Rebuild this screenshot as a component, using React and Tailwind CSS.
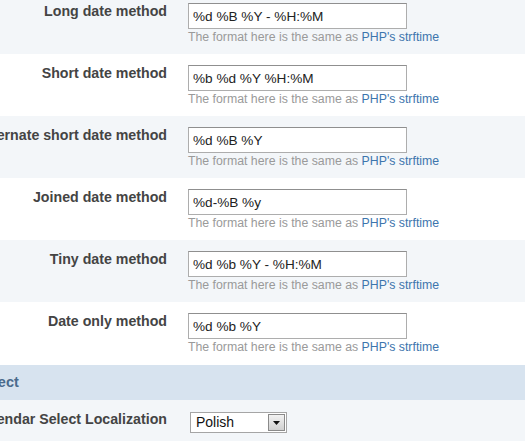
import React from "react";

const rows = [
  { label: "Long date method", value: "%d %B %Y - %H:%M" },
  { label: "Short date method", value: "%b %d %Y %H:%M" },
  { label: "Alternate short date method", value: "%d %B %Y" },
  { label: "Joined date method", value: "%d-%B %y" },
  { label: "Tiny date method", value: "%d %b %Y - %H:%M" },
  { label: "Date only method", value: "%d %b %Y" },
];

const Hint = () => (
  <p className="h-[16px] text-[12.3px] leading-[16px] text-[#9a9a9a] whitespace-nowrap">
    The format here is the same as <a href="#" className="text-[#3d75ad]">PHP's strftime</a>
  </p>
);

const Row = ({ label, value, odd }) => (
  <div className={`flex h-[62px] pt-[11px] ${odd ? "bg-[#f3f6f9]" : "bg-white"}`}>
    {/* Label column, right aligned */}
    <div className="w-[267px] shrink-0 flex justify-end">
      <span className="whitespace-nowrap text-[14.2px] leading-[17px] font-bold text-[#444]">{label}</span>
    </div>
    <div className="ml-[21px]">
      <input
        type="text"
        defaultValue={value}
        className="block w-[219px] h-[26px] border border-[#adadad] border-t-[#8f8f8f] bg-white px-[4px] text-[13.6px] text-[#222] outline-none"
      />
      <Hint />
    </div>
  </div>
);

export default function App() {
  return (
    <div className="w-[525px] h-[441px] overflow-hidden bg-white font-['Liberation_Sans',Arial,sans-serif]">
      <div className="-mt-[8px] -ml-[100px] w-[625px]">
        {rows.map((r, i) => (
          <Row key={r.label} label={r.label} value={r.value} odd={i % 2 === 0} />
        ))}

        {/* Section header */}
        <div className="h-[35px] mt-[1px] bg-[#d7e3ef] pl-[10px] flex items-center">
          <span className="whitespace-nowrap text-[14.5px] font-bold text-[#4a6b8c]">Calendar Select</span>
        </div>

        {/* Localization row */}
        <div className="flex h-[62px] pt-[11px] bg-[#f3f6f9]">
          <div className="w-[267px] shrink-0 flex justify-end">
            <span className="whitespace-nowrap text-[14.2px] leading-[17px] font-bold text-[#444]">Calendar Select Localization</span>
          </div>
          <div className="ml-[23px] pt-[1px]">
            <div className="flex items-center w-[97px] h-[21px] border border-[#a5a5a5] bg-white">
              <span className="flex-1 pl-[5px] text-[14px] text-[#111]">Polish</span>
              <span className="mr-[1px] flex items-center justify-center w-[17px] h-[17px] border border-[#8a8a8a] bg-gradient-to-b from-[#f2f2f2] to-[#d0d0d0]">
                <svg width="7" height="4" viewBox="0 0 7 4">
                  <path d="M0 0h7L3.5 4z" fill="#111" />
                </svg>
              </span>
            </div>
            <p className="mt-[5px] text-[12.3px] leading-[16px] text-[#9a9a9a] whitespace-nowrap">
              Language used to display the calendar select popup on this board
            </p>
          </div>
        </div>
      </div>
    </div>
  );
}
